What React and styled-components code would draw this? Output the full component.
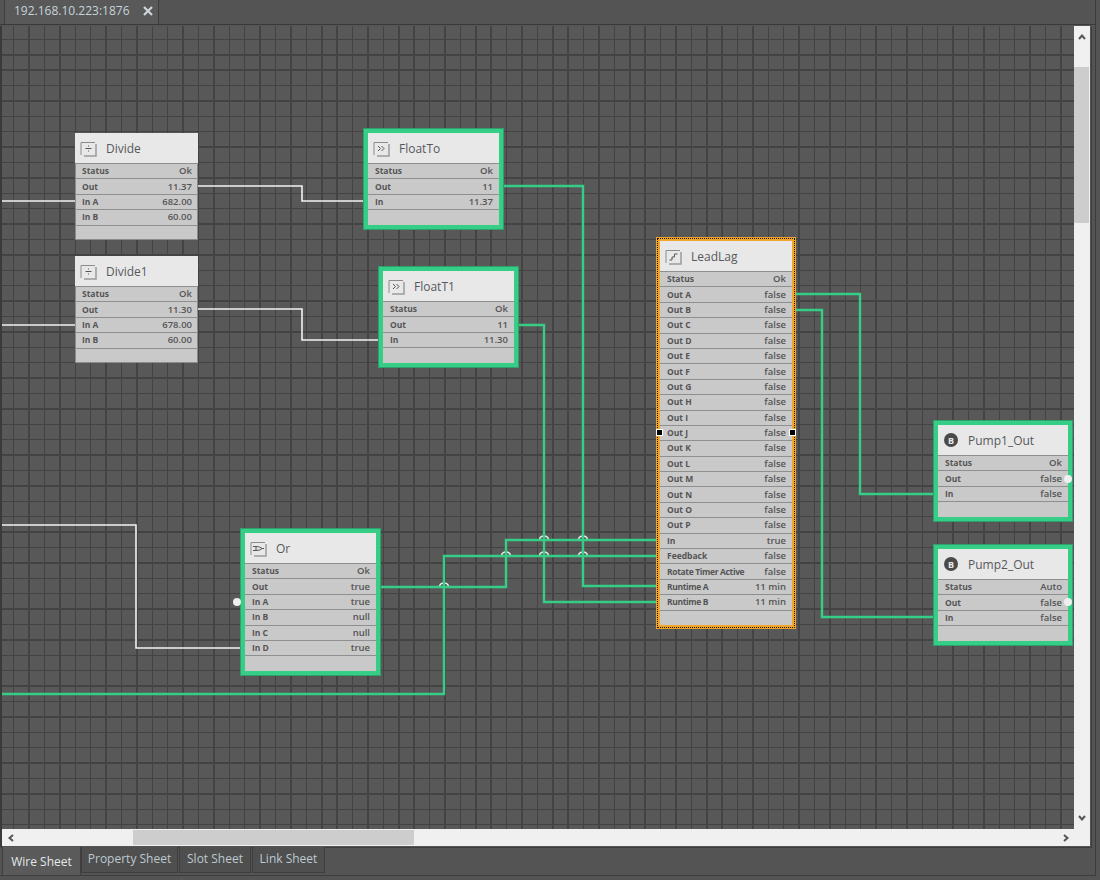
import styled, { createGlobalStyle, css } from "styled-components";

const GREEN = "#36cd87";
const WIRE_WHITE = "#f2f2f2";

const GlobalStyle = createGlobalStyle`
  html, body {
    margin: 0;
    padding: 0;
    background: #545454;
    font-family: "Open Sans", "Liberation Sans", sans-serif;
  }
`;

const Page = styled.div`
  width: 1100px;
  height: 880px;
  overflow: hidden;
  background: #545454;
`;

const Frame = styled.div`
  width: 1096px;
  height: 876px;
  box-sizing: border-box;
  border-right: 1px solid #3c3c3c;
  border-bottom: 1px solid #3c3c3c;
  display: flex;
  flex-direction: column;
`;

const DocBar = styled.div`
  height: 25px;
  flex: none;
  box-sizing: border-box;
  padding-left: 4px;
  border-bottom: 1px solid #3a3a3a;
  display: flex;
`;

const DocTab = styled.div`
  width: 155px;
  height: 24px;
  box-sizing: border-box;
  padding: 0 0 3px 9px;
  border: 1px solid #3e3e3e;
  border-top: 0;
  border-bottom: 0;
  background: #595959;
  color: #c6d3d9;
  font-size: 12px;
  display: flex;
  align-items: center;
  gap: 13px;
`;

const CloseGlyph = styled.svg`
  width: 10px;
  height: 10px;
  flex: none;
`;

const Workspace = styled.div`
  margin-top: 1px;
  flex: none;
  width: 1091px;
  height: 821px;
  display: grid;
  grid-template-columns: 1072px 16px;
  grid-template-rows: 803px 17px;
  padding-left: 2px;
  box-sizing: border-box;
  border-left: 2px solid #3a3a3a;
  padding-left: 0;
  box-shadow: 1px 1px 0 #3d3d3d;
`;

const Canvas = styled.div`
  position: relative;
  overflow: hidden;
  background-color: #585858;
  background-image:
    repeating-linear-gradient(90deg, transparent 0 11px, #434343 11px 12.5px, transparent 12.5px 15.4px),
    repeating-linear-gradient(180deg, transparent 0 12.6px, #434343 12.6px 14.1px, transparent 14.1px 15.4px);
`;

const Wires = styled.svg`
  position: absolute;
  left: 0;
  top: 0;
  width: 1072px;
  height: 803px;
`;

const ScrollTrack = styled.div`
  background: #f0f0f0;
  position: relative;
  display: flex;
  flex-direction: ${p => (p.$vertical ? "column" : "row")};
  align-items: center;
  justify-content: space-between;
  ${p =>
    p.$vertical
      ? css`
          padding: 7px 0 7px;
          grid-row: 1;
          grid-column: 2;
        `
      : css`
          padding: 0 20px 0 5px;
          grid-row: 2;
          grid-column: 1 / span 2;
        `}
`;

const ScrollThumb = styled.div`
  position: absolute;
  background: #cdcdcd;
  ${p =>
    p.$vertical
      ? css`
          left: 0;
          top: 41px;
          width: 15px;
          height: 156px;
        `
      : css`
          left: 131px;
          top: 1px;
          width: 281px;
          height: 15px;
        `}
`;

const ArrowIcon = styled.svg`
  width: 8px;
  height: 8px;
  flex: none;
  position: relative;
`;

const SheetTabs = styled.div`
  flex: 1;
  padding-left: 2px;
  display: flex;
  align-items: flex-start;
  border-left: 0;
`;

const SheetTab = styled.div`
  box-sizing: border-box;
  width: ${p => p.$w}px;
  height: ${p => (p.$active ? 29 : 26)}px;
  margin-right: ${p => p.$gap || 0}px;
  padding-bottom: ${p => (p.$active ? 0 : 2)}px;
  background: ${p => (p.$active ? "#5a5a5a" : "#4f4f4f")};
  color: ${p => (p.$active ? "#e4e8ea" : "#bcc9cf")};
  font-size: 12px;
  display: flex;
  align-items: center;
  justify-content: center;
  border: 1px solid #3e3e3e;
  border-top: 0;
`;

const NodeBox = styled.div`
  position: absolute;
  left: ${p => p.$x - 2}px;
  top: ${p => p.$y - 26}px;
  width: ${p => p.$w}px;
  background: #c9c9c9;
  ${p =>
    p.$state === "plain" &&
    css`
      box-shadow: 0 0 0 1px #8b8b8b inset;
    `}
  ${p =>
    p.$state === "selected" &&
    css`
      border: 4px solid ${GREEN};
      box-shadow: 0 0 0 1px #2fa06d;
    `}
  ${p =>
    p.$state === "focused" &&
    css`
      border: 4px solid #f0a62a;
      &::after {
        content: "";
        position: absolute;
        inset: -3px;
        border: 1px dotted #1a1200;
        pointer-events: none;
      }
    `}
`;

const NodeHeader = styled.div`
  height: 30px;
  box-sizing: border-box;
  background: #e8e8e8;
  padding-left: 5px;
  display: flex;
  align-items: center;
  gap: 9px;
  color: #56585c;
  font-size: 12px;
`;

const NodeRow = styled.div`
  height: 15.4px;
  box-sizing: border-box;
  padding: 0 6px 1px 7px;
  border-top: 1.4px solid #8f8f8f;
  display: flex;
  align-items: center;
  justify-content: space-between;
  color: #555;
  white-space: nowrap;
`;

const RowLabel = styled.span`
  font-size: 8.5px;
  font-weight: 700;
  letter-spacing: ${p => (p.$tight ? "-0.35px" : "0")};
`;

const RowValue = styled.span`
  font-size: 9.5px;
  font-weight: 600;
`;

const TypeIcon = styled.svg`
  width: 17px;
  height: 17px;
  flex: none;
`;

const BooleanBadge = styled.span`
  width: 14px;
  height: 14px;
  margin: 0 1px;
  flex: none;
  border-radius: 50%;
  background: #4a4a4a;
  color: #e8e8e8;
  font-size: 9px;
  font-weight: 700;
  display: flex;
  align-items: center;
  justify-content: center;
`;

const SelectHandle = styled.span`
  position: absolute;
  top: ${p => p.$top}px;
  ${p => p.$side}: -4px;
  width: 5px;
  height: 5px;
  box-sizing: content-box;
  background: #000;
  border: 1px solid #fff;
  z-index: 2;
`;

const PortDot = styled.span`
  position: absolute;
  left: ${p => p.$x - 6}px;
  top: ${p => p.$y - 30}px;
  width: 8px;
  height: 8px;
  border-radius: 50%;
  background: #efefef;
`;

const glyphs = {
  divide: (
    <>
      <path d="M5.5 8.5h6" stroke="#555" />
      <path d="M8 6h1M8 11h1" stroke="#555" />
    </>
  ),
  float: <path d="M5 6l2.5 2.5L5 11M8.5 6l2.5 2.5L8.5 11" stroke="#555" fill="none" />,
  step: <path d="M4.5 12h2.500v-3h2.500v-3h3" stroke="#555" fill="none" />,
  gate: (
    <path
      d="M3 6.500h3c3 0 5 1 6 2-1 1-3 2-6 2h-3M6 6.500v4M12 8.500h2"
      stroke="#555"
      fill="none"
    />
  ),
};

function NodeIcon({ type }) {
  return (
    <TypeIcon viewBox="0 0 17 17">
      <path d="M1 15V2.500h14" stroke="#8c8c8c" fill="none" />
      <path d="M16 4v12H4" stroke="#9a9a9a" strokeWidth="1.500" fill="none" />
      {glyphs[type]}
    </TypeIcon>
  );
}

const nodes = [
  {
    name: "Divide", icon: "divide", x: 75, y: 133, w: 123, state: "plain",
    rows: [["Status", "Ok"], ["Out", "11.37"], ["In A", "682.00"], ["In B", "60.00"], []],
  },
  {
    name: "Divide1", icon: "divide", x: 75, y: 256, w: 123, state: "plain",
    rows: [["Status", "Ok"], ["Out", "11.30"], ["In A", "678.00"], ["In B", "60.00"], []],
  },
  {
    name: "FloatTo", icon: "float", x: 364, y: 129, w: 131, state: "selected",
    rows: [["Status", "Ok"], ["Out", "11"], ["In", "11.37"], []],
  },
  {
    name: "FloatT1", icon: "float", x: 379, y: 267, w: 131, state: "selected",
    rows: [["Status", "Ok"], ["Out", "11"], ["In", "11.30"], []],
  },
  {
    name: "Or", icon: "gate", x: 241, y: 529, w: 131, state: "selected",
    rows: [["Status", "Ok"], ["Out", "true"], ["In A", "true"], ["In B", "null"], ["In C", "null"], ["In D", "true"], []],
  },
  {
    name: "LeadLag", icon: "step", x: 656, y: 237, w: 132, state: "focused",
    rows: [
      ["Status", "Ok"],
      ..."ABCDEFGHIJKLMNOP".split("").map(l => ["Out " + l, "false"]),
      ["In", "true"],
      ["Feedback", "false"],
      ["Rotate Timer Active", "false", true],
      ["Runtime A", "11 min", true],
      ["Runtime B", "11 min", true],
      [],
    ],
  },
  {
    name: "Pump1_Out", badge: true, x: 934, y: 421, w: 130, state: "selected",
    rows: [["Status", "Ok"], ["Out", "false"], ["In", "false"], []],
  },
  {
    name: "Pump2_Out", badge: true, x: 934, y: 545, w: 130, state: "selected",
    rows: [["Status", "Auto"], ["Out", "false"], ["In", "false"], []],
  },
];

// page coordinates, the svg viewBox shifts them to the canvas
const whiteWires = [
  "M0 201H75",
  "M198 186H302V201H364",
  "M0 325H75",
  "M198 309H302V340H379",
  "M0 525H136V648H241",
];

const greenWires = [
  "M495 186H583V586H656",
  "M510 325H544V602H656",
  "M372 587H506V540H656",
  "M0 694H444V556H656",
  "M788 294H860V494H934",
  "M788 310H822V617H934",
];

const bumps = [
  [444, 587],
  [506, 556],
  [544, 556],
  [583, 556],
  [544, 540],
  [583, 540],
];

const dots = [
  [237, 602],
  [1068, 479],
  [1068, 602],
];

function Node({ node }) {
  return (
    <NodeBox $x={node.x} $y={node.y} $w={node.w} $state={node.state}>
      <NodeHeader>
        {node.badge ? <BooleanBadge>B</BooleanBadge> : <NodeIcon type={node.icon} />}
        {node.name}
      </NodeHeader>
      {node.rows.map(([label, value, tight], i) => (
        <NodeRow key={i}>
          <RowLabel $tight={tight}>{label}</RowLabel>
          <RowValue>{value}</RowValue>
        </NodeRow>
      ))}
      {node.state === "focused" && (
        <>
          <SelectHandle $side="left" $top={188} />
          <SelectHandle $side="right" $top={188} />
        </>
      )}
    </NodeBox>
  );
}

export default function App() {
  return (
    <Page>
      <GlobalStyle />
      <Frame>
        <DocBar>
          <DocTab>
            192.168.10.223:1876
            <CloseGlyph viewBox="0 0 10 10">
              <path d="M1 1l8 8M9 1l-8 8" stroke="#cfd6d9" strokeWidth="2.200" />
            </CloseGlyph>
          </DocTab>
        </DocBar>
        <Workspace>
          <Canvas>
            <Wires viewBox="2 26 1072 803">
              {whiteWires.map(d => (
                <path key={d} d={d} fill="none" stroke={WIRE_WHITE} strokeWidth="1.600" />
              ))}
              {bumps.map(([x, y]) => (
                <path
                  key={x + "-" + y}
                  d={`M${x - 4.500} ${y}a4.500 4 0 0 1 9 0`}
                  fill="none"
                  stroke="#f0f0f0"
                  strokeWidth="1.600"
                />
              ))}
              {greenWires.map(d => (
                <path key={d} d={d} fill="none" stroke={GREEN} strokeWidth="2.400" />
              ))}
            </Wires>
            {nodes.map(n => (
              <Node key={n.name} node={n} />
            ))}
            {dots.map(([x, y]) => (
              <PortDot key={x + "-" + y} $x={x} $y={y} />
            ))}
          </Canvas>
          <ScrollTrack $vertical>
            <ScrollThumb $vertical />
            <ArrowIcon viewBox="0 0 8 8">
              <path d="M1 6l3-3.500L7 6" stroke="#555" strokeWidth="2" fill="none" />
            </ArrowIcon>
            <ArrowIcon viewBox="0 0 8 8">
              <path d="M1 2l3 3.500L7 2" stroke="#555" strokeWidth="2" fill="none" />
            </ArrowIcon>
          </ScrollTrack>
          <ScrollTrack>
            <ScrollThumb />
            <ArrowIcon viewBox="0 0 8 8">
              <path d="M6 1L2.500 4 6 7" stroke="#555" strokeWidth="2" fill="none" />
            </ArrowIcon>
            <ArrowIcon viewBox="0 0 8 8">
              <path d="M2 1l3.500 3L2 7" stroke="#555" strokeWidth="2" fill="none" />
            </ArrowIcon>
          </ScrollTrack>
        </Workspace>
        <SheetTabs>
          <SheetTab $active $w={79}>Wire Sheet</SheetTab>
          <SheetTab $w={97} $gap={1}>Property Sheet</SheetTab>
          <SheetTab $w={72} $gap={1}>Slot Sheet</SheetTab>
          <SheetTab $w={73}>Link Sheet</SheetTab>
        </SheetTabs>
      </Frame>
    </Page>
  );
}
